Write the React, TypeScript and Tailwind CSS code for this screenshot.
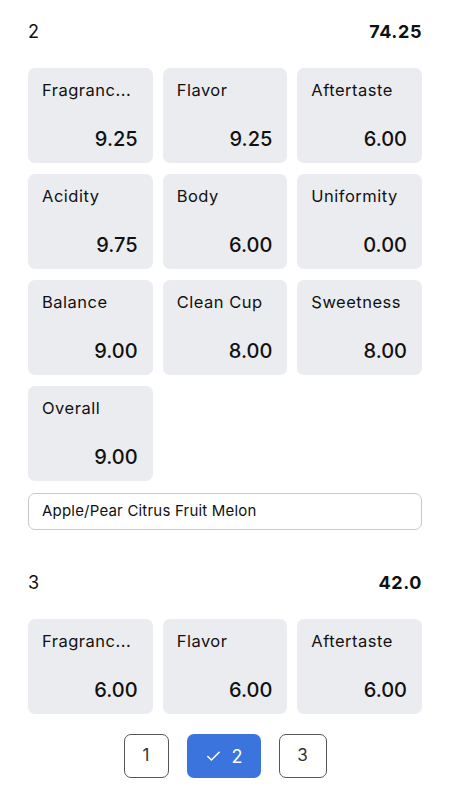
import { Check } from 'lucide-react';

type Score = { label: string; value: string };

// labels are cut to fit the narrow cards, as the app shows them
const SESSION_2: Score[] = [
  { label: 'Fragranc...', value: '9.25' },
  { label: 'Flavor', value: '9.25' },
  { label: 'Aftertaste', value: '6.00' },
  { label: 'Acidity', value: '9.75' },
  { label: 'Body', value: '6.00' },
  { label: 'Uniformity', value: '0.00' },
  { label: 'Balance', value: '9.00' },
  { label: 'Clean Cup', value: '8.00' },
  { label: 'Sweetness', value: '8.00' },
  { label: 'Overall', value: '9.00' },
];

const SESSION_3: Score[] = [
  { label: 'Fragranc...', value: '6.00' },
  { label: 'Flavor', value: '6.00' },
  { label: 'Aftertaste', value: '6.00' },
];

function ScoreCard({ label, value }: Score) {
  return (
    <div className="h-[95px] rounded-[7px] bg-[#ebecf0] pl-[14px] pr-[15px] pt-[10px] pb-[11px] flex flex-col justify-between">
      <p className="text-[16.5px] leading-[24px] tracking-[0.5px] text-[#111] whitespace-nowrap">{label}</p>
      <p className="text-[20px] leading-[26px] font-medium text-[#111] text-right">{value}</p>
    </div>
  );
}

function SessionHeader({ index, total }: { index: string; total: string }) {
  return (
    <div className="flex items-center justify-between h-[24px]">
      <span className="text-[18px] text-[#111]">{index}</span>
      <span className="text-[18px] font-bold tracking-[0.6px] text-[#111]">{total}</span>
    </div>
  );
}

export default function App() {
  return (
    <div className="w-[450px] h-[800px] bg-white px-[28px] pt-[19px] font-['Inter',sans-serif] overflow-hidden">
      <SessionHeader index="2" total="74.25" />
      <div className="grid grid-cols-3 gap-x-[10px] gap-y-[11px] mt-[25px]">
        {SESSION_2.map((s) => (
          <ScoreCard key={s.label} {...s} />
        ))}
      </div>
      <div className="mt-[12px] h-[37px] rounded-[7px] border border-[#c9c9cc] px-[13px] flex items-center text-[15px] tracking-[0.2px] text-[#111]">
        Apple/Pear Citrus Fruit Melon
      </div>

      <div className="mt-[40px]">
        <SessionHeader index="3" total="42.0" />
      </div>
      <div className="grid grid-cols-3 gap-x-[10px] mt-[25px]">
        {SESSION_3.map((s) => (
          <ScoreCard key={s.label} {...s} />
        ))}
      </div>

      <div className="flex items-center justify-center gap-[18px] mt-[20px]">
        <button className="w-[45px] h-[44px] rounded-[7px] border border-[#555] text-[17px] text-[#333]">1</button>
        <button className="w-[74px] h-[44px] rounded-[7px] bg-[#3a74dc] text-white text-[18px] flex items-center justify-center gap-[10px]">
          <Check size={17} strokeWidth={2.2} />
          <span>2</span>
        </button>
        <button className="w-[48px] h-[44px] rounded-[7px] border border-[#555] text-[17px] text-[#333]">3</button>
      </div>
    </div>
  );
}
